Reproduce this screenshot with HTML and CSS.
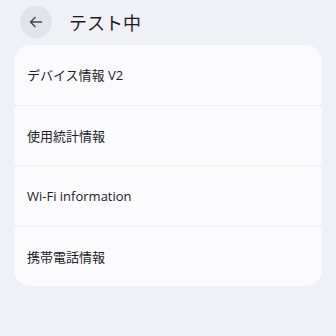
FILE: index.html
```html
<!DOCTYPE html>
<html lang="ja">
<head>
    <meta charset="UTF-8">
    <meta name="viewport" content="width=device-width, initial-scale=1.0">
    <title>テスト中</title>
    <link rel="stylesheet" href="styles.css">
</head>
<body>
    <div class="header">
        <button class="back" type="button">
            <svg width="16" height="16" viewBox="0 0 16 16"><path d="M14 8H2.5M7.5 3L2.5 8l5 5" fill="none" stroke="#44464f" stroke-width="1.4"/></svg>
        </button>
        <h1>テスト中</h1>
    </div>

    <div class="list">
        <a class="item">デバイス情報 V2</a>
        <a class="item">使用統計情報</a>
        <a class="item">Wi-Fi information</a>
        <a class="item">携帯電話情報</a>
    </div>
</body>
</html>
```

FILE: styles.css
```css
body {
    margin: 0;
    padding: 0;
    background: #f0f0f7;
    font-family: "Open Sans", "Noto Sans CJK JP", sans-serif;
    color: #1c1b1f;
}
.header {
    display: flex;
    align-items: center;
    height: 44px;
    padding-left: 20px;
}
.back {
    width: 32px;
    height: 32px;
    border-radius: 50%;
    border: none;
    background: #e2e2ea;
    display: flex;
    align-items: center;
    justify-content: center;
    padding: 0;
}
.header h1 {
    margin: 0 0 0 17px;
    font-size: 18px;
    font-weight: 400;
    font-family: "Noto Sans CJK JP", sans-serif;
}
.list {
    margin: 1px 14px 0;
    display: flex;
    flex-direction: column;
    gap: 1px;
    border-radius: 16px;
    overflow: hidden;
}
.item {
    display: flex;
    align-items: center;
    height: 59.5px;
    padding-left: 13px;
    background: #fbfbfe;
    border-radius: 4px;
    font-size: 13px;
}
```
